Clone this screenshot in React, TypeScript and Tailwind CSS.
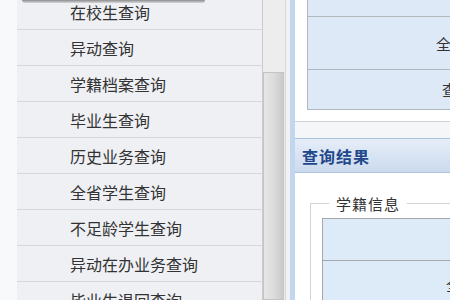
import React from "react";

const items = [
  "在校生查询",
  "异动查询",
  "学籍档案查询",
  "毕业生查询",
  "历史业务查询",
  "全省学生查询",
  "不足龄学生查询",
  "异动在办业务查询",
  "毕业生退回查询",
];

const font = { fontFamily: '"Microsoft YaHei", "Noto Sans CJK SC", sans-serif' };

export default function App() {
  return (
    <div
      className="relative flex w-[450px] h-[300px] overflow-hidden bg-white text-[#333]"
      style={font}
    >
      {/* left white strip */}
      <div className="w-[17px] shrink-0 bg-[#f8f9fa]" />

      {/* menu */}
      <div className="relative w-[245px] shrink-0 bg-[#eef0f4]">
        <div className="absolute left-[5px] top-0 h-[3px] w-[183px] rounded-b-full bg-gradient-to-b from-[#8e8e8e] to-[#d6d8dc]" />
        <div className="-mt-[6px] flex flex-col">
          {items.map((t) => (
            <div
              key={t}
              className="flex h-[36px] shrink-0 items-center border-b border-[#d5d7db] pl-[53px] text-[16px] leading-none"
            >
              {t}
            </div>
          ))}
        </div>
      </div>

      {/* scrollbar */}
      <div className="flex w-[23px] shrink-0 flex-col border-l border-[#c9cbcf] bg-[#ededed]">
        <div className="mt-[72px] h-[260px] w-[21px] border border-[#c4c4c4] bg-gradient-to-r from-[#e6e6e6] via-[#dcdcdc] to-[#c9c9c9]" />
      </div>

      {/* gap */}
      <div className="w-[5px] shrink-0 border-l border-[#d8d8d8] bg-[#f2f2f2]" />

      {/* right panel */}
      <div className="flex min-w-0 flex-1 flex-col border-l-[5px] border-[#c3d6ef] bg-white">
        {/* top section */}
        <div className="h-[121px] shrink-0 pl-[12px]">
          <div className="w-[300px] border-b border-l border-[#b3b7be] bg-[#dde9f7] text-[15px] leading-none">
            <div className="h-[17px] border-b border-[#b3b7be]" />
            <div className="flex h-[53px] items-center border-b border-[#b3b7be] pl-[128px]">
              全国学籍号：
            </div>
            <div className="flex h-[39px] items-center pl-[134px]">
              查询条件：
            </div>
          </div>
        </div>
        <div className="h-[17px] shrink-0 border-t border-[#cfd2d6] bg-[#f5f6f7]" />

        {/* header */}
        <div className="flex h-[35px] shrink-0 items-center border-y border-[#aec3e0] bg-gradient-to-b from-[#e6eef8] to-[#cbdaee] pl-[7px] text-[16px] font-bold tracking-[1px] text-[#22478a]">
          查询结果
        </div>

        {/* content */}
        <div className="flex-1 pl-[15px] pt-[30px]">
          <div className="relative w-[300px] border-l border-t border-[#d2d4d8] pl-[11px] pt-[14px]">
            <div className="absolute -top-[10px] left-[18px] bg-white px-[7px] text-[15px] leading-[20px] tracking-[1px] text-[#333]">
              学籍信息
            </div>
            <div className="border-l border-t border-[#a3a7ae] bg-[#ddebf9] text-[15px] leading-none">
              <div className="h-[42px] border-b border-[#a3a7ae]" />
              <div className="flex h-[46px] items-center pl-[123px]">全国学籍号：</div>
            </div>
          </div>
        </div>
      </div>
    </div>
  );
}
